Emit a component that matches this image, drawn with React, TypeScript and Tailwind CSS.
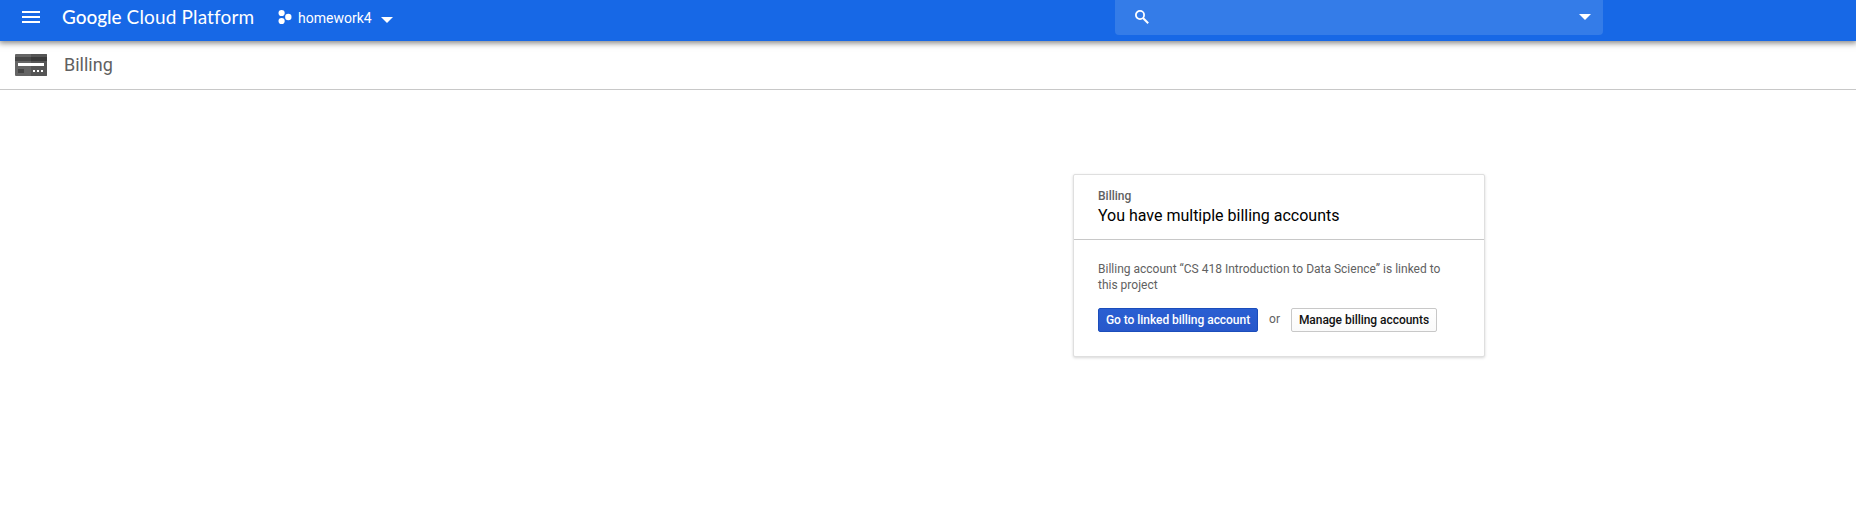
function ProjectIcon() {
  return (
    <svg className="ml-6 h-4 w-[14px] shrink-0" viewBox="0 0 14 16" fill="white">
      <circle cx="3.6" cy="4" r="3.1" />
      <circle cx="3.6" cy="12" r="3.1" />
      <circle cx="10.3" cy="8" r="3.2" />
    </svg>
  );
}

function CardIcon() {
  return (
    <svg className="h-[22px] w-8 shrink-0" viewBox="0 0 32 22">
      <rect width="32" height="22" rx="1" fill="#656565" />
      <path d="M16 0h15a1 1 0 0 1 1 1v20a1 1 0 0 1-1 1H16z" fill="#555555" />
      <rect y="3" width="16" height="4" fill="#474747" />
      <rect x="16" y="3" width="16" height="4" fill="#3a3a3a" />
      <rect x="3" y="9" width="26" height="3" fill="white" />
      <rect x="3" y="15" width="6" height="4" fill="#454545" />
      <path d="M18 16h2v2h-2zM22 16h2v2h-2zM26 16h2v2h-2z" fill="white" />
    </svg>
  );
}

function TopBar() {
  return (
    <header className="relative flex h-[41px] items-start bg-[#1768e6] text-white shadow-[0_1px_6px_1px_rgba(0,0,0,0.5)]">
      <div className="flex h-[34px] w-[1115px] shrink-0 items-center pl-[22px]">
        <svg className="h-3 w-[18px] shrink-0" viewBox="0 0 18 12" fill="white">
          <path d="M0 0h18v2H0zM0 5h18v2H0zM0 10h18v2H0z" />
        </svg>
        <div className="ml-[22px] w-[192px] shrink-0 whitespace-nowrap font-['Lato',sans-serif] text-[19px] leading-[34px]">
          <span className="font-medium tracking-[-0.05px]">Google</span>
          <span className="tracking-[0.15px]"> Cloud Platform</span>
        </div>
        <ProjectIcon />
        <span className="ml-[6px] w-[74px] pt-[2px] text-[14px] leading-5">homework4</span>
        <svg className="mt-[5px] ml-[9px] h-[6px] w-3" viewBox="0 0 12 6" fill="white">
          <path d="M0 0h12L6 6z" />
        </svg>
      </div>
      <div className="flex h-[35px] w-[488px] items-start justify-between rounded-b-sm bg-[#347ce8] pt-[10px] pr-3 pl-5">
        <svg className="h-[14px] w-[14px]" viewBox="0 0 14 14" fill="none" stroke="white">
          <circle cx="5" cy="5" r="4.1" strokeWidth="1.8" />
          <path d="M8 8l5.2 5.2" strokeWidth="2" />
        </svg>
        <svg className="mt-1 h-[6px] w-3" viewBox="0 0 12 6" fill="white">
          <path d="M0 0h12L6 6z" />
        </svg>
      </div>
    </header>
  );
}

function BillingCard() {
  return (
    <section className="ml-[1073px] mt-[84px] h-[183px] w-[412px] rounded-[2px] border border-[#dfdfdf] bg-white shadow-[0_1px_3px_rgba(0,0,0,0.16)]">
      <div className="h-[65px] border-b border-[#c8c8c8] pt-[13px] pl-6">
        <div className="text-[12px] leading-4 font-medium text-[#616161]">Billing</div>
        <h2 className="mt-[2px] text-[16px] leading-5 tracking-[-0.01px] text-black">You have multiple billing accounts</h2>
      </div>
      <div className="pt-[21px] pl-6 text-[12px] leading-4 text-[#616161]">
        <p className="w-[350px]">Billing account “CS 418 Introduction to Data Science” is linked to this project</p>
        <div className="mt-[15px] flex items-center">
          <button className="h-6 w-[160px] rounded-[2px] border border-[#1b4dbb] bg-linear-to-b from-[#2a5fd2] to-[#2858ca] font-medium tracking-[-0.04px] whitespace-nowrap text-white">Go to linked billing account</button>
          <span className="w-[33px] pb-[2px] text-center">or</span>
          <button className="h-6 w-[146px] rounded-[2px] border border-[#c8c8c8] bg-linear-to-b from-white to-[#fafafa] font-medium tracking-[-0.04px] whitespace-nowrap text-[#111111]">Manage billing accounts</button>
        </div>
      </div>
    </section>
  );
}

export default function App() {
  return (
    <div className="h-[516px] w-[1856px] overflow-hidden bg-white font-['Roboto',sans-serif]">
      <TopBar />
      <div className="flex h-[49px] items-center border-b border-[#c8c8c8] pl-[15px]">
        <CardIcon />
        <h1 className="ml-[17px] text-[18px] leading-6 text-[#616161]">Billing</h1>
      </div>
      <BillingCard />
    </div>
  );
}
